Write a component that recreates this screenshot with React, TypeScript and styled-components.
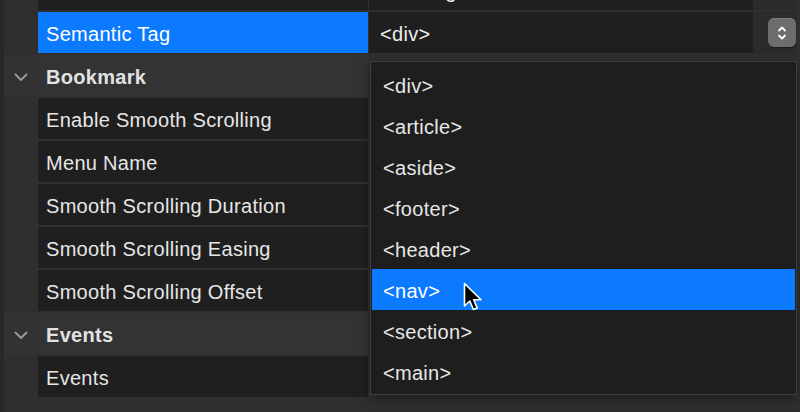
import { styled, createGlobalStyle } from "styled-components";

const GlobalStyle = createGlobalStyle`
  *, *::before, *::after {
    box-sizing: border-box;
  }
  html, body {
    margin: 0;
    padding: 0;
    background: #2f2f2f;
    overflow: hidden;
  }
  body {
    font-family: "Liberation Sans", Arial, sans-serif;
  }
`;

type Row =
  | { kind: "group"; label: string }
  | { kind: "prop"; label: string; value?: string; selected?: boolean; stepper?: boolean };

const rows: Row[] = [
  { kind: "prop", label: "HTML Element", value: "Heading" },
  { kind: "prop", label: "Semantic Tag", value: "<div>", selected: true, stepper: true },
  { kind: "group", label: "Bookmark" },
  { kind: "prop", label: "Enable Smooth Scrolling" },
  { kind: "prop", label: "Menu Name" },
  { kind: "prop", label: "Smooth Scrolling Duration" },
  { kind: "prop", label: "Smooth Scrolling Easing" },
  { kind: "prop", label: "Smooth Scrolling Offset" },
  { kind: "group", label: "Events" },
  { kind: "prop", label: "Events" },
];

const options = [
  "<div>",
  "<article>",
  "<aside>",
  "<footer>",
  "<header>",
  "<nav>",
  "<section>",
  "<main>",
];

function Chevron() {
  return (
    <svg width="14" height="9" viewBox="0 0 14 9">
      <path
        d="M1.5 1.5 L7 7 L12.5 1.5"
        fill="none"
        stroke="#9a9a9a"
        strokeWidth="1.9"
        strokeLinecap="round"
        strokeLinejoin="round"
      />
    </svg>
  );
}

function StepperIcon() {
  return (
    <svg width="10" height="16" viewBox="0 0 10 16">
      <path
        d="M2 5.5 L5 2.5 L8 5.5 M2 10.5 L5 13.5 L8 10.5"
        fill="none"
        stroke="#ffffff"
        strokeWidth="1.8"
        strokeLinecap="round"
        strokeLinejoin="round"
      />
    </svg>
  );
}

function Cursor() {
  return (
    <svg width="24" height="32" viewBox="0 0 24 32">
      <path
        d="M1.5 1.5 L1.5 24 L6.8 19 L10.4 27.5 L14.2 26 L10.7 17.8 L18 17.8 Z"
        fill="#000000"
        stroke="#ffffff"
        strokeWidth="1.6"
        strokeLinejoin="round"
      />
    </svg>
  );
}

export default function App() {
  return (
    <>
      <GlobalStyle />
      <Panel>
        <List>
          {rows.map((row, i) =>
            row.kind === "group" ? (
              <GroupRow key={i}>
                <Toggle>
                  <Chevron />
                </Toggle>
                <GroupLabel>{row.label}</GroupLabel>
              </GroupRow>
            ) : (
              <PropRow key={i}>
                <Spacer />
                <Label $selected={row.selected}>{row.label}</Label>
                {row.value !== undefined && (
                  <ValueArea>
                    <Value>{row.value}</Value>
                    <StepperSlot>
                      {row.stepper && (
                        <Stepper>
                          <StepperIcon />
                        </Stepper>
                      )}
                    </StepperSlot>
                  </ValueArea>
                )}
              </PropRow>
            )
          )}
        </List>
        <Menu>
          {options.map((opt) => (
            <MenuItem key={opt} $active={opt === "<nav>"}>
              {opt}
              {opt === "<nav>" && (
                <Pointer>
                  <Cursor />
                </Pointer>
              )}
            </MenuItem>
          ))}
        </Menu>
      </Panel>
    </>
  );
}

const Panel = styled.div`
  position: relative;
  width: 800px;
  height: 412px;
  overflow: hidden;
  background: #2f2f2f;
  border-left: 4px solid #282828;
`;

const List = styled.div`
  display: flex;
  flex-direction: column;
  gap: 2px;
  margin-top: -31px;
`;

const PropRow = styled.div`
  display: grid;
  grid-template-columns: 34px 330px 1fr;
  height: 41px;
  font-size: 20px;
  letter-spacing: 0.3px;
  color: #e6e6e6;
`;

const Spacer = styled.div``;

const Label = styled.div<{ $selected?: boolean }>`
  display: flex;
  align-items: center;
  padding: 3px 0 0 8px;
  background: ${(p) => (p.$selected ? "#0b7aff" : "#1f1f1f")};
  color: ${(p) => (p.$selected ? "#ffffff" : "#e6e6e6")};
`;

const ValueArea = styled.div`
  display: grid;
  grid-template-columns: 1fr 44px;
  margin-left: 1px;
  margin-right: 3px;
  background: #2b2b2b;
`;

const Value = styled.div`
  display: flex;
  align-items: center;
  padding: 3px 0 0 11px;
  background: #1f1f1f;
  color: #ececec;
`;

const StepperSlot = styled.div`
  display: flex;
  align-items: center;
  justify-content: flex-end;
  padding-right: 1px;
`;

const Stepper = styled.div`
  width: 28px;
  height: 29px;
  border-radius: 6px;
  background: #6d6d6d;
  box-shadow: inset 0 1px 0 rgba(255, 255, 255, 0.12), 0 1px 1px rgba(0, 0, 0, 0.4);
  display: flex;
  align-items: center;
  justify-content: center;
`;

const GroupRow = styled.div`
  display: grid;
  grid-template-columns: 34px 330px;
  height: 41px;
`;

const Toggle = styled.div`
  display: flex;
  align-items: center;
  justify-content: center;
  padding: 4px 1px 0 0;
  background: #323232;
`;

const GroupLabel = styled.div`
  display: flex;
  align-items: center;
  padding: 3px 0 0 8px;
  background: #333333;
  font-size: 20px;
  font-weight: 700;
  letter-spacing: 0.3px;
  color: #e2e2e2;
`;

const Menu = styled.div`
  position: absolute;
  left: 366px;
  top: 61px;
  width: 427px;
  height: 334px;
  padding: 2px 1px;
  background: #1e1e1e;
  border: 1px solid #3d3d3d;
  box-shadow: 0 4px 12px rgba(0, 0, 0, 0.35);
  display: flex;
  flex-direction: column;
`;

const MenuItem = styled.div<{ $active?: boolean }>`
  position: relative;
  height: 41px;
  flex-shrink: 0;
  display: flex;
  align-items: center;
  padding: 3px 0 0 11px;
  font-size: 20px;
  letter-spacing: 0.3px;
  color: ${(p) => (p.$active ? "#ffffff" : "#e6e6e6")};
  background: ${(p) => (p.$active ? "#0b7aff" : "transparent")};
`;

const Pointer = styled.div`
  position: absolute;
  left: 91px;
  top: 13px;
  line-height: 0;
`;
